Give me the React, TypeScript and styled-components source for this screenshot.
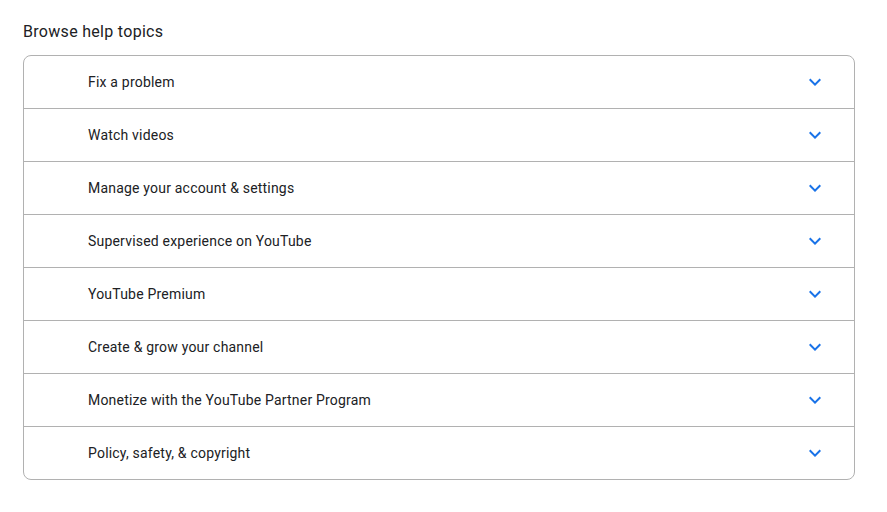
import styled, { createGlobalStyle } from 'styled-components';

const GlobalStyle = createGlobalStyle`
  body {
    margin: 0;
    background: #fff;
    font-family: Roboto, 'Noto Sans', Arial, sans-serif;
    color: #202124;
  }
`;

const Page = styled.div`
  padding: 22px 32px 0 23px;
`;

const Title = styled.h2`
  margin: 0 0 13px;
  font-size: 16px;
  font-weight: 400;
  line-height: 20px;
  letter-spacing: 0.3px;
  color: #202124;
`;

const Card = styled.div`
  border: 1px solid #b1b1b1;
  border-radius: 8px;
  overflow: hidden;
`;

const Row = styled.div<{ $last?: boolean }>`
  display: flex;
  align-items: center;
  justify-content: space-between;
  height: 52px;
  padding: 0 27px 0 64px;
  border-bottom: ${(p) => (p.$last ? 'none' : '1px solid #b1b1b1')};
  cursor: pointer;
`;

const Label = styled.span`
  font-size: 14px;
  letter-spacing: 0.2px;
  color: #202124;
`;

const Chevron = () => (
  <svg width='24' height='24' viewBox='0 0 24 24' fill='#1a73e8'>
    <path d='M16.59 8.59L12 13.17 7.41 8.59 6 10l6 6 6-6z' />
  </svg>
);

const topics = [
  'Fix a problem',
  'Watch videos',
  'Manage your account & settings',
  'Supervised experience on YouTube',
  'YouTube Premium',
  'Create & grow your channel',
  'Monetize with the YouTube Partner Program',
  'Policy, safety, & copyright',
];

export default function App() {
  return (
    <>
      <GlobalStyle />
      <Page>
        <Title>Browse help topics</Title>
        <Card>
          {topics.map((t, i) => (
            <Row key={t} $last={i === topics.length - 1}>
              <Label>{t}</Label>
              <Chevron />
            </Row>
          ))}
        </Card>
      </Page>
    </>
  );
}
